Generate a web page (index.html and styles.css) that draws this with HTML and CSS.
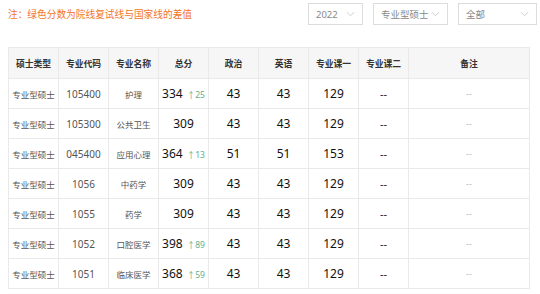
FILE: index.html
```html
<!DOCTYPE html>
<html lang="zh">
<head>
<meta charset="utf-8">
<link rel="stylesheet" href="styles.css">
</head>
<body>
<div class="top">
  <div class="note">注：绿色分数为院线复试线与国家线的差值</div>
  <div class="selects">
    <div class="sel w1"><span>2022</span><svg viewBox="0 0 10 6"><path d="M1 1l4 4 4-4"/></svg></div>
    <div class="sel w2"><span>专业型硕士</span><svg viewBox="0 0 10 6"><path d="M1 1l4 4 4-4"/></svg></div>
    <div class="sel w3"><span>全部</span><svg viewBox="0 0 10 6"><path d="M1 1l4 4 4-4"/></svg></div>
  </div>
</div>
<table class="tbl">
  <colgroup>
    <col class="c"><col class="c"><col class="c"><col class="c"><col class="c"><col class="c"><col class="c"><col class="c"><col>
  </colgroup>
  <thead>
    <tr><th>硕士类型</th><th>专业代码</th><th>专业名称</th><th>总分</th><th>政治</th><th>英语</th><th>专业课一</th><th>专业课二</th><th>备注</th></tr>
  </thead>
  <tbody>
    <tr><td class="g">专业型硕士</td><td class="k">105400</td><td class="g">护理</td><td class="n">334 <i>↑25</i></td><td class="n">43</td><td class="n">43</td><td class="n">129</td><td class="d">--</td><td class="r">--</td></tr>
    <tr><td class="g">专业型硕士</td><td class="k">105300</td><td class="g">公共卫生</td><td class="n">309</td><td class="n">43</td><td class="n">43</td><td class="n">129</td><td class="d">--</td><td class="r">--</td></tr>
    <tr><td class="g">专业型硕士</td><td class="k">045400</td><td class="g">应用心理</td><td class="n">364 <i>↑13</i></td><td class="n">51</td><td class="n">51</td><td class="n">153</td><td class="d">--</td><td class="r">--</td></tr>
    <tr><td class="g">专业型硕士</td><td class="k">1056</td><td class="g">中药学</td><td class="n">309</td><td class="n">43</td><td class="n">43</td><td class="n">129</td><td class="d">--</td><td class="r">--</td></tr>
    <tr><td class="g">专业型硕士</td><td class="k">1055</td><td class="g">药学</td><td class="n">309</td><td class="n">43</td><td class="n">43</td><td class="n">129</td><td class="d">--</td><td class="r">--</td></tr>
    <tr><td class="g">专业型硕士</td><td class="k">1052</td><td class="g">口腔医学</td><td class="n">398 <i>↑89</i></td><td class="n">43</td><td class="n">43</td><td class="n">129</td><td class="d">--</td><td class="r">--</td></tr>
    <tr><td class="g">专业型硕士</td><td class="k">1051</td><td class="g">临床医学</td><td class="n">368 <i>↑59</i></td><td class="n">43</td><td class="n">43</td><td class="n">129</td><td class="d">--</td><td class="r">--</td></tr>
  </tbody>
</table>
</body>
</html>
```
FILE: styles.css
```css
* { box-sizing: border-box; }
body {
  margin: 0;
  padding: 3px 8px 0 8px;
  background: #fff;
  font-family: "Noto Sans", "Noto Sans CJK SC", sans-serif;
  color: #333;
}
.top {
  display: flex;
  justify-content: space-between;
  align-items: center;
  height: 22px;
}
.note {
  color: #f5741f;
  font-family: "Noto Sans CJK SC", sans-serif;
  font-size: 9.7px;
  line-height: 22px;
}
.selects {
  display: flex;
  gap: 10px;
  margin-right: -5px;
}
.sel {
  height: 22px;
  border: 1px solid #dcdcdc;
  display: flex;
  align-items: center;
  justify-content: space-between;
  padding: 0 7px 0 7px;
  font-family: "Noto Sans", "Noto Sans CJK SC", sans-serif;
  font-size: 9.5px;
  color: #888;
}
.sel svg {
  width: 9px;
  height: 6px;
  fill: none;
  stroke: #c8c8c8;
  stroke-width: 1;
}
.w1 { width: 55px; }
.w2 { width: 75px; }
.w3 { width: 79px; }
.tbl {
  margin-top: 22px;
  width: 522px;
  border-collapse: collapse;
  table-layout: fixed;
}
.tbl col.c { width: 50px; }
.tbl th, .tbl td {
  border: 1px solid #e9e9e9;
  text-align: center;
  padding: 0;
  white-space: nowrap;
}
.tbl th {
  height: 31px;
  background: #f6f6f6;
  font-family: "Noto Sans CJK SC", sans-serif;
  font-size: 8.8px;
  font-weight: bold;
  color: #333;
}
.tbl td { height: 30px; }
.tbl td.g {
  font-family: "Noto Sans CJK SC", sans-serif;
  font-size: 8.5px;
  color: #555;
}
.tbl td.k {
  font-size: 10px;
  color: #555;
}
.tbl td.n {
  font-size: 12px;
  color: #111;
}
.tbl td.n i {
  font-style: normal;
  font-size: 8.5px;
  color: #5fae8c;
  margin-left: 1px;
}
.tbl td.d {
  font-size: 11px;
  color: #222;
}
.tbl td.r {
  font-size: 9px;
  color: #bbb;
}
```
